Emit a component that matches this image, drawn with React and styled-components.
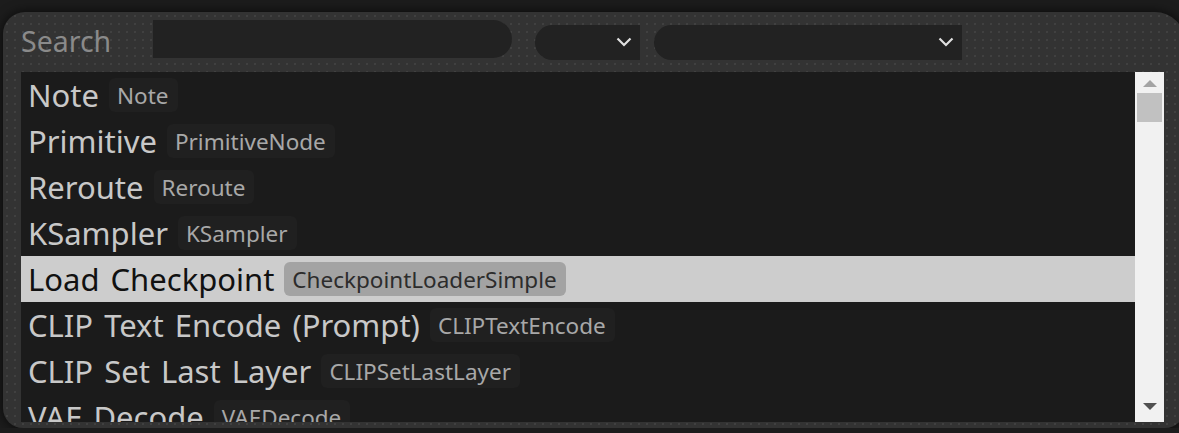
import styled, { createGlobalStyle } from "styled-components";

const GlobalStyle = createGlobalStyle`
  html, body {
    margin: 0;
    background: #1c1c1c;
    overflow: hidden;
  }
  body {
    font-family: "Noto Sans", "Open Sans", sans-serif;
  }
`;

const Dialog = styled.div`
  box-sizing: border-box;
  margin: 12px 0 0 3px;
  width: 1182px;
  height: 416px;
  padding: 0 18px 6px 18px;
  display: flex;
  flex-direction: column;
  background-color: #333;
  background-image: radial-gradient(rgba(255, 255, 255, 0.07) 0.7px, transparent 1px);
  background-size: 8px 8px;
  border-radius: 22px 30px 20px 20px;
  box-shadow: 0 0 12px rgba(0, 0, 0, 0.7);
`;

const Header = styled.div`
  height: 60px;
  display: flex;
  align-items: center;
`;

const SearchLabel = styled.span`
  width: 132px;
  font-size: 28.5px;
  color: #8a8a8a;
  margin-top: -2px;
`;

const SearchInput = styled.div`
  width: 359px;
  height: 38px;
  margin-top: -6px;
  background: #222;
  border-radius: 0 19px 19px 0;
`;

const Select = styled.div`
  box-sizing: border-box;
  width: ${(p) => p.$width}px;
  height: 35px;
  margin-left: ${(p) => p.$gap}px;
  background: #222;
  border-radius: 18px 0 0 18px;
  display: flex;
  align-items: center;
  justify-content: flex-end;
  padding-right: 8px;
`;

const Body = styled.div`
  flex: 1;
  display: flex;
  min-height: 0;
  width: 1143px;
`;

const List = styled.div`
  flex: 1;
  background: #1b1b1b;
  overflow: hidden;
`;

const Row = styled.div`
  height: 46px;
  display: flex;
  align-items: center;
  padding-left: 7px;
  gap: 10px;
  background: ${(p) => (p.$selected ? "#cdcdcd" : "transparent")};
`;

const Name = styled.span`
  font-size: 31px;
  word-spacing: 3px;
  color: ${(p) => (p.$selected ? "#111" : "#c8c8c8")};
  white-space: nowrap;
`;

const Tag = styled.span`
  height: 34px;
  display: flex;
  align-items: center;
  padding: 0 9px 0 8px;
  border-radius: 6px;
  font-size: 22.5px;
  white-space: nowrap;
  background: ${(p) => (p.$selected ? "#a3a3a3" : "#202020")};
  color: ${(p) => (p.$selected ? "#2c2c2c" : "#a8a8a8")};
`;

const Scrollbar = styled.div`
  width: 29px;
  background: #f1f1f1;
  display: flex;
  flex-direction: column;
  align-items: center;
`;

const Arrow = styled.div`
  width: 0;
  height: 0;
  border-left: 7px solid transparent;
  border-right: 7px solid transparent;
  ${(p) =>
    p.$down
      ? "border-top: 7px solid #505050; margin-top: auto; margin-bottom: 12px;"
      : "border-bottom: 7px solid #a3a3a3; margin-top: 8px;"}
`;

const Thumb = styled.div`
  width: 25px;
  height: 29px;
  margin-top: 6px;
  background: #c1c1c1;
`;

function Chevron() {
  return (
    <svg width="16" height="10" viewBox="0 0 16 10">
      <path d="M1.5 1.5 L8 8 L14.5 1.5" fill="none" stroke="#e0e0e0" strokeWidth="2.2" />
    </svg>
  );
}

const items = [
  ["Note", "Note"],
  ["Primitive", "PrimitiveNode"],
  ["Reroute", "Reroute"],
  ["KSampler", "KSampler"],
  ["Load Checkpoint", "CheckpointLoaderSimple"],
  ["CLIP Text Encode (Prompt)", "CLIPTextEncode"],
  ["CLIP Set Last Layer", "CLIPSetLastLayer"],
  ["VAE Decode", "VAEDecode"],
];

export default function App() {
  return (
    <>
      <GlobalStyle />
      <Dialog>
        <Header>
          <SearchLabel>Search</SearchLabel>
          <SearchInput />
          <Select $width={105} $gap={23}>
            <Chevron />
          </Select>
          <Select $width={308} $gap={14}>
            <Chevron />
          </Select>
        </Header>
        <Body>
          <List>
            {items.map(([name, type], i) => (
              <Row key={type} $selected={i === 4}>
                <Name $selected={i === 4}>{name}</Name>
                <Tag $selected={i === 4}>{type}</Tag>
              </Row>
            ))}
          </List>
          <Scrollbar>
            <Arrow />
            <Thumb />
            <Arrow $down />
          </Scrollbar>
        </Body>
      </Dialog>
    </>
  );
}
